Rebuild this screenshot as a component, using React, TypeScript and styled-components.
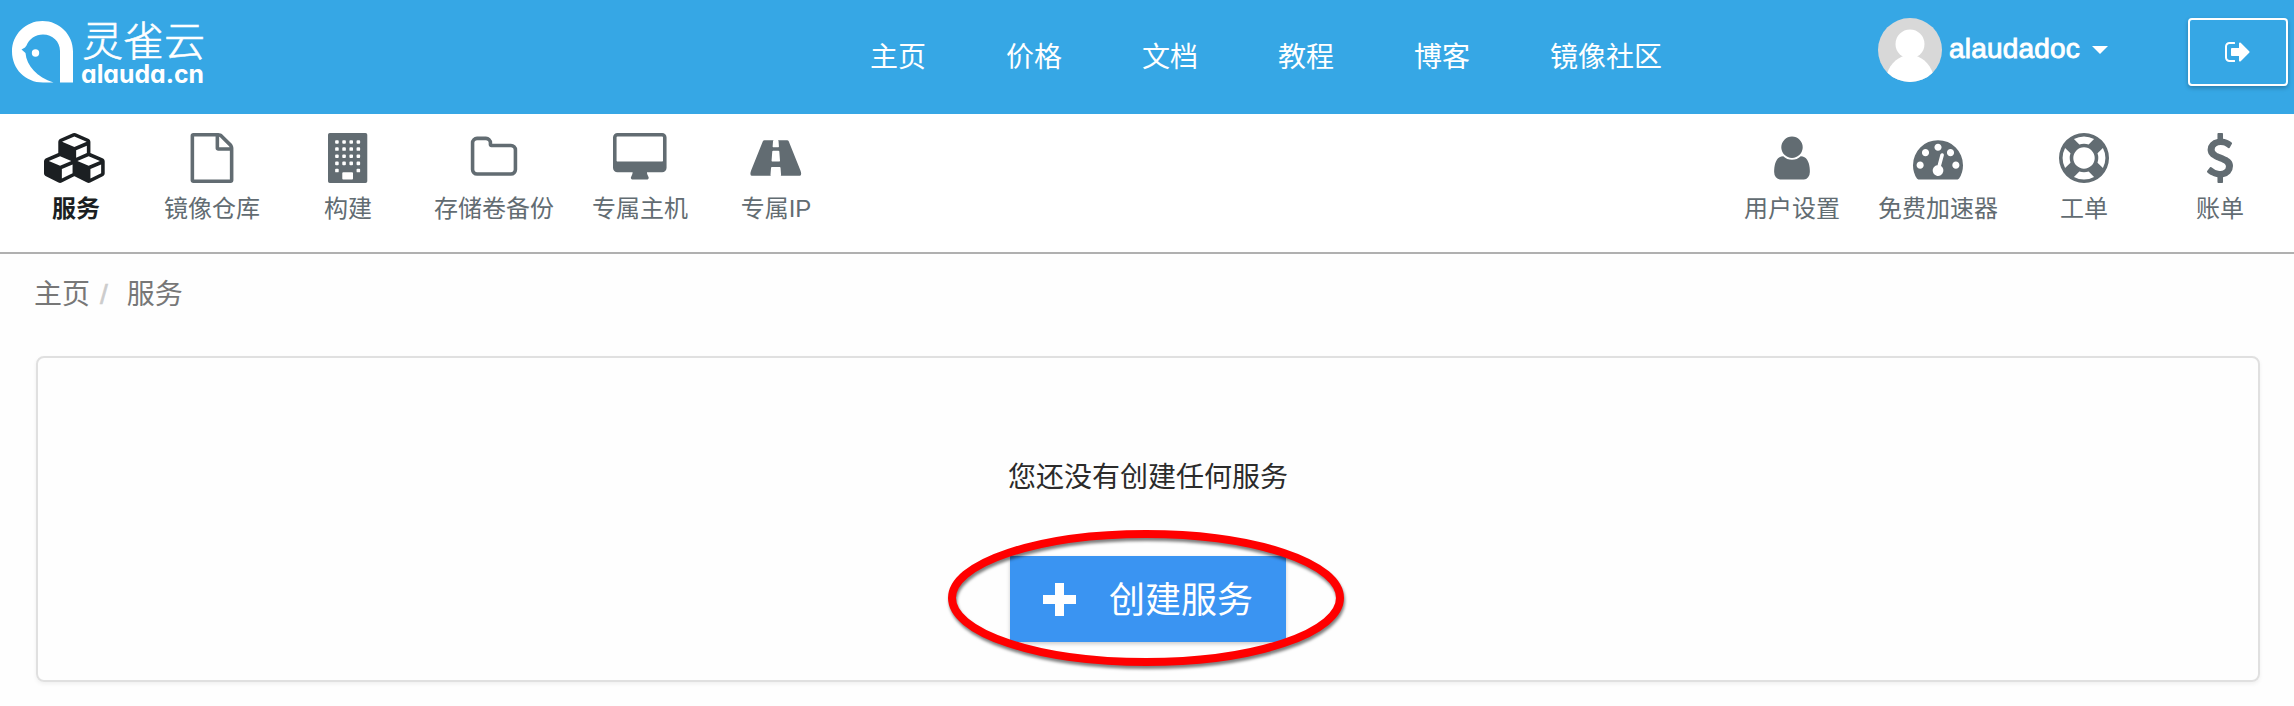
import React from 'react';
import styled, { createGlobalStyle } from 'styled-components';

const GlobalStyle = createGlobalStyle`
  * { box-sizing: border-box; }
  body {
    margin: 0;
    background: #fefefe;
    font-family: "Liberation Sans", "Noto Sans CJK SC", sans-serif;
  }
`;

const Page = styled.div`
  height: 706px;
  display: flex;
  flex-direction: column;
  overflow: hidden;
`;

const Header = styled.header`
  height: 114px;
  flex: none;
  display: flex;
  align-items: flex-start;
  padding: 0 6px 0 12px;
  background: #36a7e5;
  color: #fff;
`;

const Logo = styled.svg`
  flex: none;
  width: 196px;
  height: 64px;
  margin-top: 20px;
  overflow: visible;
`;

const LogoName = styled.text`
  font-family: "Noto Sans CJK SC", sans-serif;
  font-size: 41px;
  font-weight: 300;
  stroke: #fff;
  stroke-width: 0.6px;
`;

const LogoDomain = styled.text`
  font-family: Inter, sans-serif;
  font-size: 25px;
  font-weight: 650;
  font-feature-settings: "cv11";
`;

const MainNav = styled.nav`
  display: flex;
  gap: 80px;
  height: 114px;
  padding-top: 2px;
  align-items: center;
  margin-left: 662px;
  font-size: 28px;
  line-height: 40px;
`;

const NavLink = styled.a`
  color: #fff;
  white-space: nowrap;
`;

const Account = styled.div`
  display: flex;
  align-items: center;
  margin: 18px 0 0 auto;
  height: 64px;
`;

const AvatarIcon = styled.svg`
  width: 64px;
  height: 64px;
`;

const UserName = styled.span`
  margin: 0 12px 0 7px;
  font-size: 28px;
  line-height: 32px;
  padding-bottom: 3px;
  letter-spacing: 0.2px;
  -webkit-text-stroke: 0.9px #fff;
`;

const Caret = styled.span`
  border: 8px solid transparent;
  border-top-color: #fff;
  border-bottom: 0;
`;

const LogoutButton = styled.button`
  width: 100px;
  height: 68px;
  margin: 18px 0 0 80px;
  padding: 0;
  display: flex;
  align-items: center;
  justify-content: center;
  background: transparent;
  border: 2px solid #fff;
  border-radius: 4px;
  color: #fff;
  box-shadow: 0 2px 4px rgba(0, 0, 0, 0.25);
`;

const Toolbar = styled.div`
  height: 140px;
  flex: none;
  display: flex;
  justify-content: space-between;
  padding: 0 6px 0 8px;
  background: #fff;
  border-bottom: 2px solid #b0b0b0;
`;

const ToolGroup = styled.div`
  display: flex;
`;

const Tool = styled.a<{ $active?: boolean }>`
  min-width: 136px;
  padding: 19px 18px 0;
  display: flex;
  flex-direction: column;
  align-items: center;
  color: ${(p) => (p.$active ? '#1b1f22' : '#626c72')};
  font-weight: ${(p) => (p.$active ? 700 : 400)};
  font-size: 24px;
`;

const ToolLabel = styled.span`
  margin-top: 8px;
  line-height: 36px;
  white-space: nowrap;
`;

const Glyph = styled.svg<{ $size: number }>`
  display: block;
  height: ${(p) => p.$size}px;
  fill: currentColor;
`;

const Breadcrumb = styled.div`
  display: flex;
  flex: none;
  height: 102px;
  padding: 21px 0 0 34px;
  font-size: 28px;
  line-height: 40px;
  color: #777;
`;

const Slash = styled.span`
  margin: 0 19px 0 10px;
  color: #ccc;
  -webkit-text-stroke: 0.6px #ccc;
`;

const Card = styled.main`
  position: relative;
  flex: none;
  height: 326px;
  margin: 0 34px 0 36px;
  padding-top: 100px;
  display: flex;
  flex-direction: column;
  align-items: center;
  border: 2px solid #e0e0e0;
  border-radius: 8px;
  box-shadow: 0 2px 4px rgba(0, 0, 0, 0.06);
`;

const EmptyText = styled.p`
  margin: 0;
  font-size: 28px;
  line-height: 40px;
  color: #2b2b2b;
`;

const CreateButton = styled.button`
  width: 276px;
  height: 86px;
  margin-top: 58px;
  padding: 0 0 0 33px;
  display: flex;
  align-items: center;
  gap: 33px;
  border: 0;
  background: #3a94f2;
  color: #fff;
  font-family: inherit;
  font-size: 36px;
  line-height: 52px;
  box-shadow: 0 2px 4px rgba(0, 0, 0, 0.2);
`;

const CreateLabel = styled.span`
  padding-top: 3px;
`;

const Highlight = styled.svg`
  position: absolute;
  left: 906px;
  top: 168px;
  width: 408px;
  height: 148px;
  pointer-events: none;
  filter: drop-shadow(1px 3px 1.5px rgba(0, 0, 0, 0.5));
`;

type IconName = keyof typeof icons;

const icons = {
  cubes: { w: 2304, d: 'M640 1632l384-192v-314l-384 164v342zm-64-454l404-173-404-173-404 173zm1088 454l384-192v-314l-384 164v342zm-64-454l404-173-404-173-404 173zm-448-293l384-165v-266l-384 164v267zm-64-379l441-189-441-189-441 189zm1088 518v416q0 36-19 67t-52 47l-448 224q-25 14-57 14t-57-14l-448-224q-4-2-7-4-2 2-7 4l-448 224q-25 14-57 14t-57-14l-448-224q-33-16-52-47t-19-67v-416q0-38 21.5-70t56.5-48l434-186v-400q0-38 21.5-70t56.5-48l448-192q23-10 50-10t50 10l448 192q35 16 56.5 48t21.5 70v400l434 186q36 16 57 48t21 70z' },
  file: { w: 1792, d: 'M1596 380q28 28 48 76t20 88v1152q0 40-28 68t-68 28h-1344q-40 0-68-28t-28-68v-1600q0-40 28-68t68-28h896q40 0 88 20t76 48zm-444-244v376h376q-10-29-22-41l-313-313q-12-12-41-22zm384 1528v-1024h-416q-40 0-68-28t-28-68v-416h-768v1536h1280z' },
  building: {
    w: 1408,
    d: 'M64 0h1280q64 0 64 64v1664q0 64-64 64h-1280q-64 0-64-64v-1664q0-64 64-64z' +
      [256, 512, 768, 1024, 1280]
        .flatMap((y) => [256, 512, 768, 1024].filter((x) => y < 1280 || x === 256 || x === 1024).map((x) => `M${x + 32} ${y}q-32 0-32 32v64q0 32 32 32h64q32 0 32-32v-64q0-32-32-32z`))
        .join('') +
      'M544 1408q-32 0-32 32v192q0 32 32 32h320q32 0 32-32v-192q0-32-32-32z',
  },
  folder: { w: 1792, d: 'M1600 1312v-704q0-40-28-68t-68-28h-704q-40 0-68-28t-28-68v-64q0-40-28-68t-68-28h-320q-40 0-68 28t-28 68v960q0 40 28 68t68 28h1216q40 0 68-28t28-68zm128-704v704q0 92-66 158t-158 66h-1216q-92 0-158-66t-66-158v-960q0-92 66-158t158-66h320q92 0 158 66t66 158v32h672q92 0 158 66t66 158z' },
  desktop: { w: 1920, d: 'M1792 992v-832q0-13-9.5-22.5t-22.5-9.5h-1600q-13 0-22.5 9.5t-9.5 22.5v832q0 13 9.5 22.5t22.5 9.5h1600q13 0 22.5-9.5t9.5-22.5zm128-832v1088q0 66-47 113t-113 47h-544q0 37 16 77.5t32 71 16 43.5q0 26-19 45t-45 19h-512q-26 0-45-19t-19-45q0-14 16-44t32-70 16-78h-544q-66 0-113-47t-47-113v-1088q0-66 47-113t113-47h1600q66 0 113 47t47 113z' },
  road: { w: 1920, d: 'M1111 996v-4l-24-320q-1-13-11-22.5t-23-9.5h-186q-13 0-23 9.5t-11 22.5l-24 320v4q-1 12 8 20t21 8h244q12 0 21-8t8-20zM1870 1463q0 73-46 73h-704q13 0 22-9.5t8-22.5l-20-256q-1-13-11-22.5t-23-9.5h-272q-13 0-23 9.5t-11 22.5l-20 256q-1 13 8 22.5t22 9.5h-704q-46 0-46-73 0-54 26-116l417-1044q8-19 26-33t38-14h339q-13 0-23 9.5t-11 22.5l-15 192q-1 14 8 23t22 9h166q13 0 22-9t8-23l-15-192q-1-13-11-22.5t-23-9.5h339q20 0 38 14t26 33l417 1044q26 62 26 116z' },
  user: { w: 1792, d: 'M1536 1399q0 109-62.5 187t-150.5 78h-854q-88 0-150.5-78t-62.5-187q0-85 8.5-160.5t31.5-152 58.5-131 94-89 134.5-34.5q131 128 313 128t313-128q76 0 134.5 34.5t94 89 58.5 131 31.5 152 8.5 160.5zm-256-887q0 159-112.5 271.5t-271.5 112.5-271.5-112.5-112.5-271.5 112.5-271.5 271.5-112.5 271.5 112.5 112.5 271.5z' },
  gauge: { w: 1792, d: 'M384 1152q0-53-37.5-90.5t-90.5-37.5-90.5 37.5-37.5 90.5 37.5 90.5 90.5 37.5 90.5-37.5 37.5-90.5zm192-448q0-53-37.5-90.5t-90.5-37.5-90.5 37.5-37.5 90.5 37.5 90.5 90.5 37.5 90.5-37.5 37.5-90.5zm428 481l101-382q6-26-7.5-48.5t-38.5-29.5-48 6.5-30 39.5l-101 382q-60 5-107 43.5t-63 98.5q-20 77 20 146t117 89 146-20 89-117q16-60-6-117t-72-91zm660-33q0-53-37.5-90.5t-90.5-37.5-90.5 37.5-37.5 90.5 37.5 90.5 90.5 37.5 90.5-37.5 37.5-90.5zm-640-640q0-53-37.5-90.5t-90.5-37.5-90.5 37.5-37.5 90.5 37.5 90.5 90.5 37.5 90.5-37.5 37.5-90.5zm448 192q0-53-37.5-90.5t-90.5-37.5-90.5 37.5-37.5 90.5 37.5 90.5 90.5 37.5 90.5-37.5 37.5-90.5zm320 448q0 261-141 483-19 29-54 29h-1402q-35 0-54-29-141-221-141-483 0-182 71-348t191-286 286-191 348-71 348 71 286 191 191 286 71 348z' },
  lifeRing: { w: 1792, d: 'M896 0q182 0 348 71t286 191 191 286 71 348-71 348-191 286-286 191-348 71-348-71-286-191-191-286-71-348 71-348 191-286 286-191 348-71zm0 128q-190 0-361 90l194 194q82-28 167-28t167 28l194-194q-171-90-361-90zm-678 1129l194-194q-28-82-28-167t28-167l-194-194q-90 171-90 361t90 361zm678 407q190 0 361-90l-194-194q-82 28-167 28t-167-28l-194 194q171 90 361 90zm0-384q159 0 271.5-112.5t112.5-271.5-112.5-271.5-271.5-112.5-271.5 112.5-112.5 271.5 112.5 271.5 271.5 112.5zm484-217l194 194q90-171 90-361t-90-361l-194 194q28 82 28 167t-28 167z' },
  dollar: { w: 1792, d: 'M1362 1185q0 153-99.5 263.5t-258.5 136.5v175q0 14-9 23t-23 9h-135q-13 0-22.5-9.5t-9.5-22.5v-175q-66-9-127.5-31t-101.5-44.5-74-48-46.5-37.5-17.5-18q-17-21-2-41l103-135q7-10 23-12 15-2 24 9l2 2q113 99 243 125 37 8 74 8 81 0 142.5-43t61.5-122q0-28-15-53t-33.5-42-58.5-37.5-66-32-80-32.5q-39-16-61.5-25t-61.5-26.5-62.5-31-56.5-35.5-53.5-42.5-43.5-49-35.5-58-21-66.5-8.5-78q0-138 98-242t255-134v-180q0-13 9.5-22.5t22.5-9.5h135q14 0 23 9t9 23v176q57 6 110.5 23t87 33.5 63.5 37.5 39 29 15 14q17 18 5 38l-81 146q-8 15-23 16-14 3-27-7-3-3-14.5-12t-39-26.5-58.5-32-74.5-26-85.5-11.5q-95 0-155 43t-60 111q0 26 8.5 48t29.5 41.5 39.5 33 56 31 60.5 27 70 27.5q53 20 81 31.5t76 35 75.5 42.5 62 50 53 63.5 31.5 76.5 13 94z' },
  signOut: { w: 1792, d: 'M704 1440q0 4 1 20t.5 26.5-3 23.5-10 19.5-20.5 6.5h-320q-119 0-203.5-84.5t-84.5-203.5v-704q0-119 84.5-203.5t203.5-84.5h320q13 0 22.5 9.5t9.5 22.5q0 4 1 20t.5 26.5-3 23.5-10 19.5-20.5 6.5h-320q-66 0-113 47t-47 113v704q0 66 47 113t113 47h312l11.5 1 11.5 3 8 5.5 7 9 2 13.5zm928-544q0 26-19 45l-544 544q-19 19-45 19t-45-19-19-45v-288h-448q-26 0-45-19t-19-45v-384q0-26 19-45t45-19h448v-288q0-26 19-45t45-19 45 19l544 544q19 19 19 45z' },
};

function Icon({ name, size = 50 }: { name: IconName; size?: number }) {
  return (
    <Glyph $size={size} viewBox={`0 0 ${icons[name].w} 1792`}>
      <path fillRule="evenodd" d={icons[name].d} />
    </Glyph>
  );
}

const mainLinks = ['主页', '价格', '文档', '教程', '博客', '镜像社区'];

const leftTools: [IconName, string][] = [
  ['cubes', '服务'],
  ['file', '镜像仓库'],
  ['building', '构建'],
  ['folder', '存储卷备份'],
  ['desktop', '专属主机'],
  ['road', '专属IP'],
];

const rightTools: [IconName, string][] = [
  ['user', '用户设置'],
  ['gauge', '免费加速器'],
  ['lifeRing', '工单'],
  ['dollar', '账单'],
];

export default function App() {
  return (
    <Page>
      <GlobalStyle />
      <Header>
        <Logo viewBox="12 20 196 64" fill="#fff">
          <path d="M53.5 82.5H43C25.500 82.500 12 69 12 51.500C12 34.500 25.500 21 42.500 21C59.500 21 73 34.500 73 51.500V82.500H60V51C60 41.500 52.500 34.500 43 34.500C35.500 34.500 29 39 26.500 45.500L25 47.500L21.500 49.500L25.500 53C26.500 66 37 77 53.500 82.500Z" />
          <circle cx="35.500" cy="53" r="3.700" />
          <LogoName x="82" y="55.500" textLength="123" lengthAdjust="spacing">灵雀云</LogoName>
          <LogoDomain x="81" y="82.500" textLength="123" lengthAdjust="spacingAndGlyphs">alauda.cn</LogoDomain>
        </Logo>
        <MainNav>
          {mainLinks.map((label) => (
            <NavLink key={label}>{label}</NavLink>
          ))}
        </MainNav>
        <Account>
          <AvatarIcon viewBox="0 0 64 64">
            <clipPath id="avatar"><circle cx="32" cy="32" r="32" /></clipPath>
            <g clipPath="url(#avatar)">
              <rect width="64" height="64" fill="#d8d8d8" />
              <circle cx="32" cy="26" r="14.500" fill="#fff" />
              <path d="M8 60C10 48 18 40 27 37.500H37C46 40 54 48 56 60V64H8Z" fill="#fff" />
            </g>
          </AvatarIcon>
          <UserName>alaudadoc</UserName>
          <Caret />
        </Account>
        <LogoutButton>
          <Icon name="signOut" size={28} />
        </LogoutButton>
      </Header>
      <Toolbar>
        <ToolGroup>
          {leftTools.map(([icon, label], i) => (
            <Tool key={label} $active={i === 0}>
              <Icon name={icon} />
              <ToolLabel>{label}</ToolLabel>
            </Tool>
          ))}
        </ToolGroup>
        <ToolGroup>
          {rightTools.map(([icon, label]) => (
            <Tool key={label}>
              <Icon name={icon} />
              <ToolLabel>{label}</ToolLabel>
            </Tool>
          ))}
        </ToolGroup>
      </Toolbar>
      <Breadcrumb>
        <span>主页</span>
        <Slash>/</Slash>
        <span>服务</span>
      </Breadcrumb>
      <Card>
        <EmptyText>您还没有创建任何服务</EmptyText>
        <CreateButton>
          <svg width="33" height="33" viewBox="0 0 33 33" fill="currentColor">
            <path d="M12 0h9v12h12v9H21v12h-9V21H0v-9h12z" />
          </svg>
          <CreateLabel>创建服务</CreateLabel>
        </CreateButton>
        <Highlight viewBox="0 0 408 148">
          <ellipse cx="202" cy="72" rx="194" ry="64" fill="none" stroke="#f00" strokeWidth="8" />
        </Highlight>
      </Card>
    </Page>
  );
}
